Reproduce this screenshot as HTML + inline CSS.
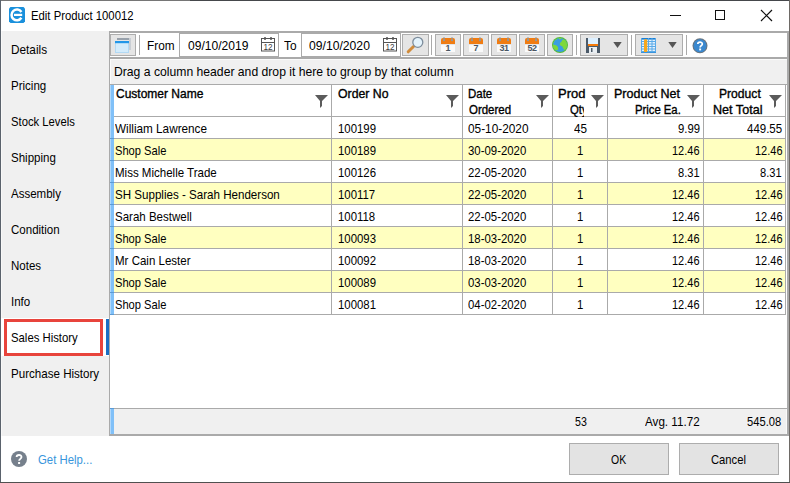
<!DOCTYPE html>
<html><head><meta charset="utf-8"><style>
html,body{margin:0;padding:0;width:790px;height:483px;overflow:hidden;background:#fff}
body{position:relative;font-family:"Liberation Sans",sans-serif}
.r{position:absolute;display:block}
.t{position:absolute;white-space:pre;line-height:16px;font-family:"Liberation Sans",sans-serif;transform-origin:0 0}
</style></head><body>
<div class="r" style="left:0px;top:0px;width:790px;height:483px;background:#fff;"></div>
<div class="r" style="left:0px;top:0px;width:790px;height:1px;background:#45474b;"></div>
<div class="r" style="left:0px;top:0px;width:190px;height:1px;background:#767676;"></div>
<div class="r" style="left:0px;top:0px;width:1px;height:483px;background:#5a626c;"></div>
<div class="r" style="left:789px;top:0px;width:1px;height:483px;background:#6e6a66;"></div>
<div class="r" style="left:0px;top:482px;width:790px;height:1px;background:#505050;"></div>
<svg class="r" style="left:9px;top:7px" width="16" height="16" viewBox="0 0 16 16">
<path d="M1.5,0 H14.5 L16,1.5 V14.5 L14.5,16 H1.5 L0,14.5 V1.5 Z" fill="#1a90dc"/>
<path d="M12.4,5 A5.35,5.35 0 1 0 12.4,10.8" fill="none" stroke="#fff" stroke-width="2.5"/>
<rect x="5" y="6.8" width="8.2" height="2.2" fill="#fff"/>
</svg>
<div class="t" style="left:30.80px;top:7.81px;font-size:12.1px;line-height:16px;color:#000;font-weight:normal;transform:scaleX(0.9357)">Edit Product 100012</div>
<div class="r" style="left:670px;top:15px;width:11px;height:1px;background:#111;"></div>
<div class="r" style="left:715px;top:10px;width:10px;height:10px;background:transparent;border:1px solid #111;box-sizing:border-box"></div>
<svg class="r" style="left:760px;top:9px" width="13" height="13" viewBox="0 0 13 13"><path d="M1,1 L12,12 M12,1 L1,12" stroke="#111" stroke-width="1.2"/></svg>
<div class="r" style="left:1px;top:31px;width:108px;height:405px;background:#f0f0f0;"></div>
<div class="r" style="left:1px;top:31px;width:1px;height:405px;background:#f8f8f8;"></div>
<div class="t" style="left:10.80px;top:41.56px;font-size:12.8px;line-height:16px;color:#000;font-weight:normal;transform:scaleX(0.9227)">Details</div>
<div class="t" style="left:10.80px;top:77.56px;font-size:12.8px;line-height:16px;color:#000;font-weight:normal;transform:scaleX(0.9000)">Pricing</div>
<div class="t" style="left:10.80px;top:113.56px;font-size:12.8px;line-height:16px;color:#000;font-weight:normal;transform:scaleX(0.8801)">Stock Levels</div>
<div class="t" style="left:10.80px;top:149.56px;font-size:12.8px;line-height:16px;color:#000;font-weight:normal;transform:scaleX(0.9000)">Shipping</div>
<div class="t" style="left:10.80px;top:185.56px;font-size:12.8px;line-height:16px;color:#000;font-weight:normal;transform:scaleX(0.9000)">Assembly</div>
<div class="t" style="left:10.80px;top:221.56px;font-size:12.8px;line-height:16px;color:#000;font-weight:normal;transform:scaleX(0.9000)">Condition</div>
<div class="t" style="left:10.80px;top:257.56px;font-size:12.8px;line-height:16px;color:#000;font-weight:normal;transform:scaleX(0.9000)">Notes</div>
<div class="t" style="left:10.80px;top:293.56px;font-size:12.8px;line-height:16px;color:#000;font-weight:normal;transform:scaleX(0.9000)">Info</div>
<div class="r" style="left:1px;top:318px;width:108px;height:38px;background:#fff;"></div>
<div class="r" style="left:4px;top:319px;width:99px;height:37px;background:transparent;border:3px solid #e8443c;box-sizing:border-box"></div>
<div class="r" style="left:106px;top:319px;width:3px;height:36px;background:#1a6fc4;"></div>
<div class="t" style="left:10.80px;top:329.56px;font-size:12.8px;line-height:16px;color:#000;font-weight:normal;transform:scaleX(0.8857)">Sales History</div>
<div class="t" style="left:10.80px;top:365.56px;font-size:12.8px;line-height:16px;color:#000;font-weight:normal;transform:scaleX(0.9048)">Purchase History</div>
<svg class="r" style="left:11px;top:451px" width="16" height="16" viewBox="0 0 16 16"><circle cx="8" cy="8" r="8" fill="#76808c"/>
<path d="M5.6,6.1 C5.6,3.3 10.5,3.3 10.5,6 C10.5,7.8 8.1,8 8.1,9.8" fill="none" stroke="#fff" stroke-width="1.8"/><rect x="7.1" y="11" width="2" height="2" fill="#fff"/></svg>
<div class="t" style="left:37.50px;top:451.56px;font-size:12.8px;line-height:16px;color:#3896dc;font-weight:normal;transform:scaleX(0.8876)">Get Help...</div>
<div class="r" style="left:569px;top:443px;width:100px;height:32px;background:#e3e3e3;border:1px solid #adadad;box-sizing:border-box"></div>
<div class="t" style="left:610.75px;top:451.56px;font-size:12.8px;line-height:16px;color:#000;font-weight:normal;transform:scaleX(0.8178)">OK</div>
<div class="r" style="left:679px;top:443px;width:100px;height:32px;background:#e3e3e3;border:1px solid #adadad;box-sizing:border-box"></div>
<div class="t" style="left:711.40px;top:451.56px;font-size:12.8px;line-height:16px;color:#000;font-weight:normal;transform:scaleX(0.8771)">Cancel</div>
<div class="r" style="left:109px;top:31px;width:680px;height:405px;background:#fff;"></div>
<div class="r" style="left:109px;top:31px;width:680px;height:2px;background:#aaaaaa;"></div>
<div class="r" style="left:109px;top:31px;width:1px;height:405px;background:#aaaaaa;"></div>
<div class="r" style="left:787px;top:31px;width:2px;height:405px;background:#aaaaaa;"></div>
<div class="r" style="left:109px;top:434px;width:680px;height:2px;background:#aaaaaa;"></div>
<div class="r" style="left:109px;top:57px;width:680px;height:2px;background:#aaaaaa;"></div>
<div class="r" style="left:110px;top:59px;width:677px;height:25px;background:#f0f0f0;"></div>
<div class="r" style="left:110px;top:59px;width:677px;height:1px;background:#fbfbfb;"></div>
<div class="r" style="left:110px;top:59px;width:1px;height:25px;background:#fbfbfb;"></div>
<div class="t" style="left:114.15px;top:63.56px;font-size:12.8px;line-height:16px;color:#000;font-weight:normal;transform:scaleX(0.9514)">Drag a column header and drop it here to group by that column</div>
<div class="r" style="left:110px;top:84px;width:677px;height:1px;background:#aaaaaa;"></div>
<div class="r" style="left:110px;top:34px;width:26px;height:22px;background:#e5e5e5;border:1px solid #adadad;box-sizing:border-box"></div>
<svg class="r" style="left:115px;top:38px" width="16" height="16" viewBox="0 0 16 16">
<rect x="2" y="0" width="14" height="2" fill="#98a1ab"/>
<rect x="14" y="0" width="2" height="12" fill="#c9ced4"/>
<rect x="0.5" y="3.5" width="13" height="11" fill="#d3ebfb" stroke="#b2d9f4"/>
<rect x="0" y="3" width="14" height="2.2" fill="#2196e8"/>
</svg>
<div class="r" style="left:139px;top:35px;width:1px;height:20px;background:#aaaaaa;"></div>
<div class="t" style="left:147.08px;top:37.56px;font-size:12.8px;line-height:16px;color:#000;font-weight:normal;transform:scaleX(0.9221)">From</div>
<div class="r" style="left:179px;top:33px;width:100px;height:24px;background:#fff;border:1px solid #aaaaaa;box-sizing:border-box"></div>
<div class="t" style="left:187.60px;top:37.56px;font-size:12.8px;line-height:16px;color:#000;font-weight:normal;transform:scaleX(0.9448)">09/10/2019</div>
<svg class="r" style="left:261px;top:36px" width="15" height="16" viewBox="0 0 15 16">
<rect x="0.5" y="2.5" width="13" height="12.5" fill="none" stroke="#555"/>
<line x1="0.5" y1="6.5" x2="13.5" y2="6.5" stroke="#555"/>
<rect x="3" y="1" width="2" height="3" rx="1" fill="#555"/><rect x="9" y="1" width="2" height="3" rx="1" fill="#555"/>
<text x="7.3" y="14" font-family="Liberation Sans" font-size="8.6" fill="#3a3a3a" text-anchor="middle" transform="scale(0.95,1)">12</text>
</svg>
<div class="t" style="left:284.10px;top:37.56px;font-size:12.8px;line-height:16px;color:#000;font-weight:normal;transform:scaleX(0.9255)">To</div>
<div class="r" style="left:301px;top:33px;width:100px;height:24px;background:#fff;border:1px solid #aaaaaa;box-sizing:border-box"></div>
<div class="t" style="left:309.10px;top:37.56px;font-size:12.8px;line-height:16px;color:#000;font-weight:normal;transform:scaleX(0.9510)">09/10/2020</div>
<svg class="r" style="left:383px;top:36px" width="15" height="16" viewBox="0 0 15 16">
<rect x="0.5" y="2.5" width="13" height="12.5" fill="none" stroke="#555"/>
<line x1="0.5" y1="6.5" x2="13.5" y2="6.5" stroke="#555"/>
<rect x="3" y="1" width="2" height="3" rx="1" fill="#555"/><rect x="9" y="1" width="2" height="3" rx="1" fill="#555"/>
<text x="7.3" y="14" font-family="Liberation Sans" font-size="8.6" fill="#3a3a3a" text-anchor="middle" transform="scale(0.95,1)">12</text>
</svg>
<div class="r" style="left:402px;top:34px;width:27px;height:22px;background:#e5e5e5;border:1px solid #adadad;box-sizing:border-box"></div>
<svg class="r" style="left:405px;top:36px" width="20" height="18" viewBox="0 0 20 18">
<line x1="3.2" y1="15.8" x2="8.5" y2="10.5" stroke="#d18c3c" stroke-width="3" stroke-linecap="round"/>
<circle cx="12.8" cy="6.3" r="5" fill="#e4f3fc" stroke="#7d8d9c" stroke-width="1.3"/>
</svg>
<div class="r" style="left:431px;top:35px;width:1px;height:20px;background:#aaaaaa;"></div>
<div class="r" style="left:435px;top:34px;width:26px;height:22px;background:#e5e5e5;border:1px solid #adadad;box-sizing:border-box"></div><svg class="r" style="left:441px;top:37px" width="15" height="16" viewBox="0 0 15 16">
<rect x="0" y="8" width="14" height="7" fill="#fafafa"/>
<path d="M0,3 Q0,1 2,1 H12 Q14,1 14,3 V7 H0 Z" fill="#f07c12"/>
<rect x="2.5" y="0" width="1" height="3" fill="#8a9aa8"/><rect x="10.5" y="0" width="1" height="3" fill="#8a9aa8"/>
<circle cx="3" cy="3.3" r="1" fill="#8a9aa8"/><circle cx="11" cy="3.3" r="1" fill="#8a9aa8"/>
<text x="7" y="14" font-family="Liberation Sans" font-weight="bold" font-size="9" letter-spacing="0" fill="#4a5663" text-anchor="middle">1</text>
</svg>
<div class="r" style="left:463px;top:34px;width:26px;height:22px;background:#e5e5e5;border:1px solid #adadad;box-sizing:border-box"></div><svg class="r" style="left:469px;top:37px" width="15" height="16" viewBox="0 0 15 16">
<rect x="0" y="8" width="14" height="7" fill="#fafafa"/>
<path d="M0,3 Q0,1 2,1 H12 Q14,1 14,3 V7 H0 Z" fill="#f07c12"/>
<rect x="2.5" y="0" width="1" height="3" fill="#8a9aa8"/><rect x="10.5" y="0" width="1" height="3" fill="#8a9aa8"/>
<circle cx="3" cy="3.3" r="1" fill="#8a9aa8"/><circle cx="11" cy="3.3" r="1" fill="#8a9aa8"/>
<text x="7" y="14" font-family="Liberation Sans" font-weight="bold" font-size="9" letter-spacing="0" fill="#4a5663" text-anchor="middle">7</text>
</svg>
<div class="r" style="left:491px;top:34px;width:26px;height:22px;background:#e5e5e5;border:1px solid #adadad;box-sizing:border-box"></div><svg class="r" style="left:497px;top:37px" width="15" height="16" viewBox="0 0 15 16">
<rect x="0" y="8" width="14" height="7" fill="#fafafa"/>
<path d="M0,3 Q0,1 2,1 H12 Q14,1 14,3 V7 H0 Z" fill="#f07c12"/>
<rect x="2.5" y="0" width="1" height="3" fill="#8a9aa8"/><rect x="10.5" y="0" width="1" height="3" fill="#8a9aa8"/>
<circle cx="3" cy="3.3" r="1" fill="#8a9aa8"/><circle cx="11" cy="3.3" r="1" fill="#8a9aa8"/>
<text x="7" y="14" font-family="Liberation Sans" font-weight="bold" font-size="9" letter-spacing="-0.4" fill="#4a5663" text-anchor="middle">31</text>
</svg>
<div class="r" style="left:519px;top:34px;width:26px;height:22px;background:#e5e5e5;border:1px solid #adadad;box-sizing:border-box"></div><svg class="r" style="left:525px;top:37px" width="15" height="16" viewBox="0 0 15 16">
<rect x="0" y="8" width="14" height="7" fill="#fafafa"/>
<path d="M0,3 Q0,1 2,1 H12 Q14,1 14,3 V7 H0 Z" fill="#f07c12"/>
<rect x="2.5" y="0" width="1" height="3" fill="#8a9aa8"/><rect x="10.5" y="0" width="1" height="3" fill="#8a9aa8"/>
<circle cx="3" cy="3.3" r="1" fill="#8a9aa8"/><circle cx="11" cy="3.3" r="1" fill="#8a9aa8"/>
<text x="7" y="14" font-family="Liberation Sans" font-weight="bold" font-size="9" letter-spacing="-0.4" fill="#4a5663" text-anchor="middle">52</text>
</svg>
<div class="r" style="left:547px;top:34px;width:26px;height:22px;background:#e5e5e5;border:1px solid #adadad;box-sizing:border-box"></div>
<svg class="r" style="left:552px;top:37px" width="16" height="16" viewBox="0 0 16 16">
<defs><clipPath id="gc"><circle cx="8" cy="8" r="7.1"/></clipPath></defs>
<circle cx="8" cy="8" r="8" fill="#58bd30"/>
<circle cx="8" cy="8" r="7.1" fill="#3a9de2"/>
<g clip-path="url(#gc)" fill="#7ed83a">
<path d="M0,0 H6 C6,1.5 5,2.5 3.5,3 C2.5,3.5 2,4.5 1.8,6 L0,6 Z"/>
<path d="M6.5,0 H10 C10,1.5 9,2.2 7.5,2.2 C6.8,2.2 6.5,1 6.5,0 Z"/>
<path d="M10.5,2.5 C12,2.5 14,3 16,4 V16 H13 C13,14 12.5,13 12,12.5 C11,11.5 10.5,10.5 10.5,9.5 C10,9 8.5,9 8,8 C7.5,7 8,6 8.5,5.5 C9.5,5 10,3.5 10.5,2.5 Z"/>
<path d="M0,7.5 C2,7.5 4,8 5,9 C6,10 6.5,11 6,12.5 C5.5,13.5 4.5,13 3.5,13 C2,13 1,12 0,11 Z"/>
</g>
</svg>
<div class="r" style="left:576px;top:35px;width:1px;height:20px;background:#aaaaaa;"></div>
<div class="r" style="left:580px;top:34px;width:48px;height:22px;background:#e5e5e5;border:1px solid #adadad;box-sizing:border-box"></div>
<svg class="r" style="left:586px;top:38px" width="15" height="16" viewBox="0 0 15 16">
<rect x="0" y="0" width="14" height="15" fill="#4b5a69"/>
<rect x="2" y="0" width="10" height="6" fill="#dcefff"/>
<rect x="2" y="6" width="10" height="2" fill="#f47a0a"/>
<rect x="3" y="9" width="8" height="6" fill="#e9eef2"/>
<rect x="5" y="10" width="1.5" height="4" fill="#4b5a69"/>
</svg>
<svg class="r" style="left:613px;top:42px" width="9" height="6" viewBox="0 0 9 6"><path d="M0.3,0 H8.7 L4.5,6 Z" fill="#555"/></svg>
<div class="r" style="left:631px;top:35px;width:1px;height:20px;background:#aaaaaa;"></div>
<div class="r" style="left:635px;top:34px;width:48px;height:22px;background:#e5e5e5;border:1px solid #adadad;box-sizing:border-box"></div>
<svg class="r" style="left:641px;top:38px" width="15" height="16" viewBox="0 0 15 16">
<rect x="0" y="0" width="15" height="15" fill="#e6f2fc"/>
<rect x="0" y="0" width="15" height="1.6" fill="#1a7fd4"/>
<g fill="#5aaae8"><rect x="0" y="3" width="15" height="1"/><rect x="0" y="5.5" width="15" height="1"/><rect x="0" y="8" width="15" height="1"/><rect x="0" y="10.5" width="15" height="1"/><rect x="0" y="13" width="15" height="1"/>
<rect x="0" y="0" width="1" height="15"/><rect x="7" y="0" width="1" height="15"/><rect x="10.5" y="0" width="1" height="15"/><rect x="14" y="0" width="1" height="15"/></g>
<rect x="3" y="1" width="3.2" height="14" rx="1.5" fill="#f7a81c"/>
<rect x="0" y="14" width="15" height="1" fill="#3a94dc"/>
</svg>
<svg class="r" style="left:668px;top:42px" width="9" height="6" viewBox="0 0 9 6"><path d="M0.3,0 H8.7 L4.5,6 Z" fill="#555"/></svg>
<div class="r" style="left:686px;top:35px;width:1px;height:20px;background:#aaaaaa;"></div>
<svg class="r" style="left:692px;top:38px" width="16" height="16" viewBox="0 0 16 16">
<circle cx="8" cy="7.8" r="7.5" fill="#6a737c"/>
<circle cx="8" cy="7.8" r="6.5" fill="#3a88cf"/>
<path d="M5.8,6 C5.8,3.6 10.3,3.6 10.3,5.9 C10.3,7.5 8.1,7.7 8.1,9.4" fill="none" stroke="#fff" stroke-width="1.7"/><rect x="7.2" y="10.5" width="1.9" height="1.9" fill="#fff"/>
</svg>
<div class="r" style="left:110px;top:85px;width:676px;height:31px;background:#fff;"></div>
<div class="r" style="left:110px;top:116px;width:676px;height:1px;background:#aaaaaa;"></div>
<div class="r" style="left:331px;top:85px;width:1px;height:230px;background:#aaaaaa;"></div>
<div class="r" style="left:462px;top:85px;width:1px;height:230px;background:#aaaaaa;"></div>
<div class="r" style="left:552px;top:85px;width:1px;height:230px;background:#aaaaaa;"></div>
<div class="r" style="left:607px;top:85px;width:1px;height:230px;background:#aaaaaa;"></div>
<div class="r" style="left:703px;top:85px;width:1px;height:230px;background:#aaaaaa;"></div>
<div class="r" style="left:785px;top:85px;width:1px;height:230px;background:#aaaaaa;"></div>
<div class="r" style="left:110px;top:85px;width:4px;height:230px;background:#80c0f8;"></div>
<div class="r" style="left:110px;top:85px;width:1px;height:230px;background:#b0d8fc;"></div>
<svg class="r" style="left:315px;top:95px" width="13" height="13" viewBox="0 0 13 13"><path d="M0,0 H13 L7,6 V11 L5,13 V6 Z" fill="#5b5b5b"/></svg>
<svg class="r" style="left:446px;top:95px" width="13" height="13" viewBox="0 0 13 13"><path d="M0,0 H13 L7,6 V11 L5,13 V6 Z" fill="#5b5b5b"/></svg>
<svg class="r" style="left:536px;top:95px" width="13" height="13" viewBox="0 0 13 13"><path d="M0,0 H13 L7,6 V11 L5,13 V6 Z" fill="#5b5b5b"/></svg>
<svg class="r" style="left:591px;top:95px" width="13" height="13" viewBox="0 0 13 13"><path d="M0,0 H13 L7,6 V11 L5,13 V6 Z" fill="#5b5b5b"/></svg>
<svg class="r" style="left:687px;top:95px" width="13" height="13" viewBox="0 0 13 13"><path d="M0,0 H13 L7,6 V11 L5,13 V6 Z" fill="#5b5b5b"/></svg>
<svg class="r" style="left:769px;top:95px" width="13" height="13" viewBox="0 0 13 13"><path d="M0,0 H13 L7,6 V11 L5,13 V6 Z" fill="#5b5b5b"/></svg>
<div class="t" style="left:115.50px;top:85.77px;font-size:12.2px;line-height:16px;color:#000;font-weight:normal;-webkit-text-stroke:0.35px currentColor;transform:scaleX(0.9849)">Customer Name</div>
<div class="t" style="left:337.60px;top:85.77px;font-size:12.2px;line-height:16px;color:#000;font-weight:normal;-webkit-text-stroke:0.35px currentColor;transform:scaleX(1.0071)">Order No</div>
<div class="t" style="left:467.76px;top:85.77px;font-size:12.2px;line-height:16px;color:#000;font-weight:normal;-webkit-text-stroke:0.35px currentColor;transform:scaleX(0.9400)">Date</div>
<div class="t" style="left:468.70px;top:101.77px;font-size:12.2px;line-height:16px;color:#000;font-weight:normal;-webkit-text-stroke:0.35px currentColor;transform:scaleX(0.9400)">Ordered</div>
<div class="t" style="left:557.74px;top:85.77px;font-size:12.2px;line-height:16px;color:#000;font-weight:normal;-webkit-text-stroke:0.35px currentColor;transform:scaleX(1.0640)">Prod</div>
<div class="r" style="left:569.5px;top:101.77px;width:14.8px;height:16px;overflow:hidden"><div class="t" style="left:0.3px;top:0;font-size:12.2px;font-weight:normal;-webkit-text-stroke:0.35px #000;transform:scaleX(0.93)">Qty</div></div>
<div class="t" style="left:613.57px;top:85.77px;font-size:12.2px;line-height:16px;color:#000;font-weight:normal;-webkit-text-stroke:0.35px currentColor;transform:scaleX(1.0255)">Product Net</div>
<div class="t" style="left:634.77px;top:101.77px;font-size:12.2px;line-height:16px;color:#000;font-weight:normal;-webkit-text-stroke:0.35px currentColor;transform:scaleX(0.9259)">Price Ea.</div>
<div class="t" style="left:719.31px;top:85.77px;font-size:12.2px;line-height:16px;color:#000;font-weight:normal;-webkit-text-stroke:0.35px currentColor;transform:scaleX(0.9948)">Product</div>
<div class="t" style="left:712.77px;top:101.77px;font-size:12.2px;line-height:16px;color:#000;font-weight:normal;-webkit-text-stroke:0.35px currentColor;transform:scaleX(1.0326)">Net Total</div>
<div class="r" style="left:114px;top:117px;width:671px;height:21px;background:#fff;"></div>
<div class="r" style="left:110px;top:138px;width:675px;height:1px;background:#aaaaaa;"></div>
<div class="r" style="left:110px;top:138px;width:4px;height:1px;background:#5b9bd5;"></div>
<div class="t" style="left:115.20px;top:120.56px;font-size:12.8px;line-height:16px;color:#000;font-weight:normal;transform:scaleX(0.9176)">William Lawrence</div>
<div class="t" style="left:338.20px;top:120.56px;font-size:12.8px;line-height:16px;color:#000;font-weight:normal;transform:scaleX(0.8900)">100199</div>
<div class="t" style="left:468.00px;top:120.56px;font-size:12.8px;line-height:16px;color:#000;font-weight:normal;transform:scaleX(0.9244)">05-10-2020</div>
<div class="t" style="left:574.05px;top:120.56px;font-size:12.8px;line-height:16px;color:#000;font-weight:normal;transform:scaleX(0.9138)">45</div>
<div class="t" style="left:677.80px;top:120.56px;font-size:12.8px;line-height:16px;color:#000;font-weight:normal;transform:scaleX(0.8834)">9.99</div>
<div class="t" style="left:746.90px;top:120.56px;font-size:12.8px;line-height:16px;color:#000;font-weight:normal;transform:scaleX(0.8969)">449.55</div>
<div class="r" style="left:114px;top:139px;width:671px;height:21px;background:#ffffc0;"></div>
<div class="r" style="left:110px;top:160px;width:675px;height:1px;background:#aaaaaa;"></div>
<div class="r" style="left:110px;top:160px;width:4px;height:1px;background:#5b9bd5;"></div>
<div class="t" style="left:115.20px;top:142.56px;font-size:12.8px;line-height:16px;color:#000;font-weight:normal;transform:scaleX(0.8704)">Shop Sale</div>
<div class="t" style="left:338.20px;top:142.56px;font-size:12.8px;line-height:16px;color:#000;font-weight:normal;transform:scaleX(0.8900)">100189</div>
<div class="t" style="left:468.00px;top:142.56px;font-size:12.8px;line-height:16px;color:#000;font-weight:normal;transform:scaleX(0.8900)">30-09-2020</div>
<div class="t" style="left:577.38px;top:142.56px;font-size:12.8px;line-height:16px;color:#000;font-weight:normal;transform:scaleX(0.8900)">1</div>
<div class="t" style="left:672.30px;top:142.56px;font-size:12.8px;line-height:16px;color:#000;font-weight:normal;transform:scaleX(0.8588)">12.46</div>
<div class="t" style="left:754.50px;top:142.56px;font-size:12.8px;line-height:16px;color:#000;font-weight:normal;transform:scaleX(0.8588)">12.46</div>
<div class="r" style="left:114px;top:161px;width:671px;height:21px;background:#fff;"></div>
<div class="r" style="left:110px;top:182px;width:675px;height:1px;background:#aaaaaa;"></div>
<div class="r" style="left:110px;top:182px;width:4px;height:1px;background:#5b9bd5;"></div>
<div class="t" style="left:115.20px;top:164.56px;font-size:12.8px;line-height:16px;color:#000;font-weight:normal;transform:scaleX(0.9000)">Miss Michelle Trade</div>
<div class="t" style="left:338.20px;top:164.56px;font-size:12.8px;line-height:16px;color:#000;font-weight:normal;transform:scaleX(0.8900)">100126</div>
<div class="t" style="left:468.00px;top:164.56px;font-size:12.8px;line-height:16px;color:#000;font-weight:normal;transform:scaleX(0.8900)">22-05-2020</div>
<div class="t" style="left:577.38px;top:164.56px;font-size:12.8px;line-height:16px;color:#000;font-weight:normal;transform:scaleX(0.8900)">1</div>
<div class="t" style="left:678.20px;top:164.56px;font-size:12.8px;line-height:16px;color:#000;font-weight:normal;transform:scaleX(0.8673)">8.31</div>
<div class="t" style="left:760.40px;top:164.56px;font-size:12.8px;line-height:16px;color:#000;font-weight:normal;transform:scaleX(0.8673)">8.31</div>
<div class="r" style="left:114px;top:183px;width:671px;height:21px;background:#ffffc0;"></div>
<div class="r" style="left:110px;top:204px;width:675px;height:1px;background:#aaaaaa;"></div>
<div class="r" style="left:110px;top:204px;width:4px;height:1px;background:#5b9bd5;"></div>
<div class="t" style="left:115.20px;top:186.56px;font-size:12.8px;line-height:16px;color:#000;font-weight:normal;transform:scaleX(0.9050)">SH Supplies - Sarah Henderson</div>
<div class="t" style="left:338.20px;top:186.56px;font-size:12.8px;line-height:16px;color:#000;font-weight:normal;transform:scaleX(0.8900)">100117</div>
<div class="t" style="left:468.00px;top:186.56px;font-size:12.8px;line-height:16px;color:#000;font-weight:normal;transform:scaleX(0.8900)">22-05-2020</div>
<div class="t" style="left:577.38px;top:186.56px;font-size:12.8px;line-height:16px;color:#000;font-weight:normal;transform:scaleX(0.8900)">1</div>
<div class="t" style="left:672.30px;top:186.56px;font-size:12.8px;line-height:16px;color:#000;font-weight:normal;transform:scaleX(0.8588)">12.46</div>
<div class="t" style="left:754.50px;top:186.56px;font-size:12.8px;line-height:16px;color:#000;font-weight:normal;transform:scaleX(0.8588)">12.46</div>
<div class="r" style="left:114px;top:205px;width:671px;height:21px;background:#fff;"></div>
<div class="r" style="left:110px;top:226px;width:675px;height:1px;background:#aaaaaa;"></div>
<div class="r" style="left:110px;top:226px;width:4px;height:1px;background:#5b9bd5;"></div>
<div class="t" style="left:115.20px;top:208.56px;font-size:12.8px;line-height:16px;color:#000;font-weight:normal;transform:scaleX(0.9000)">Sarah Bestwell</div>
<div class="t" style="left:338.20px;top:208.56px;font-size:12.8px;line-height:16px;color:#000;font-weight:normal;transform:scaleX(0.8900)">100118</div>
<div class="t" style="left:468.00px;top:208.56px;font-size:12.8px;line-height:16px;color:#000;font-weight:normal;transform:scaleX(0.8900)">22-05-2020</div>
<div class="t" style="left:577.38px;top:208.56px;font-size:12.8px;line-height:16px;color:#000;font-weight:normal;transform:scaleX(0.8900)">1</div>
<div class="t" style="left:672.30px;top:208.56px;font-size:12.8px;line-height:16px;color:#000;font-weight:normal;transform:scaleX(0.8588)">12.46</div>
<div class="t" style="left:754.50px;top:208.56px;font-size:12.8px;line-height:16px;color:#000;font-weight:normal;transform:scaleX(0.8588)">12.46</div>
<div class="r" style="left:114px;top:227px;width:671px;height:21px;background:#ffffc0;"></div>
<div class="r" style="left:110px;top:248px;width:675px;height:1px;background:#aaaaaa;"></div>
<div class="r" style="left:110px;top:248px;width:4px;height:1px;background:#5b9bd5;"></div>
<div class="t" style="left:115.20px;top:230.56px;font-size:12.8px;line-height:16px;color:#000;font-weight:normal;transform:scaleX(0.8704)">Shop Sale</div>
<div class="t" style="left:338.20px;top:230.56px;font-size:12.8px;line-height:16px;color:#000;font-weight:normal;transform:scaleX(0.8900)">100093</div>
<div class="t" style="left:468.00px;top:230.56px;font-size:12.8px;line-height:16px;color:#000;font-weight:normal;transform:scaleX(0.8900)">18-03-2020</div>
<div class="t" style="left:577.38px;top:230.56px;font-size:12.8px;line-height:16px;color:#000;font-weight:normal;transform:scaleX(0.8900)">1</div>
<div class="t" style="left:672.30px;top:230.56px;font-size:12.8px;line-height:16px;color:#000;font-weight:normal;transform:scaleX(0.8588)">12.46</div>
<div class="t" style="left:754.50px;top:230.56px;font-size:12.8px;line-height:16px;color:#000;font-weight:normal;transform:scaleX(0.8588)">12.46</div>
<div class="r" style="left:114px;top:249px;width:671px;height:21px;background:#fff;"></div>
<div class="r" style="left:110px;top:270px;width:675px;height:1px;background:#aaaaaa;"></div>
<div class="r" style="left:110px;top:270px;width:4px;height:1px;background:#5b9bd5;"></div>
<div class="t" style="left:115.20px;top:252.56px;font-size:12.8px;line-height:16px;color:#000;font-weight:normal;transform:scaleX(0.9000)">Mr Cain Lester</div>
<div class="t" style="left:338.20px;top:252.56px;font-size:12.8px;line-height:16px;color:#000;font-weight:normal;transform:scaleX(0.8900)">100092</div>
<div class="t" style="left:468.00px;top:252.56px;font-size:12.8px;line-height:16px;color:#000;font-weight:normal;transform:scaleX(0.8900)">18-03-2020</div>
<div class="t" style="left:577.38px;top:252.56px;font-size:12.8px;line-height:16px;color:#000;font-weight:normal;transform:scaleX(0.8900)">1</div>
<div class="t" style="left:672.30px;top:252.56px;font-size:12.8px;line-height:16px;color:#000;font-weight:normal;transform:scaleX(0.8588)">12.46</div>
<div class="t" style="left:754.50px;top:252.56px;font-size:12.8px;line-height:16px;color:#000;font-weight:normal;transform:scaleX(0.8588)">12.46</div>
<div class="r" style="left:114px;top:271px;width:671px;height:21px;background:#ffffc0;"></div>
<div class="r" style="left:110px;top:292px;width:675px;height:1px;background:#aaaaaa;"></div>
<div class="r" style="left:110px;top:292px;width:4px;height:1px;background:#5b9bd5;"></div>
<div class="t" style="left:115.20px;top:274.56px;font-size:12.8px;line-height:16px;color:#000;font-weight:normal;transform:scaleX(0.8704)">Shop Sale</div>
<div class="t" style="left:338.20px;top:274.56px;font-size:12.8px;line-height:16px;color:#000;font-weight:normal;transform:scaleX(0.8900)">100089</div>
<div class="t" style="left:468.00px;top:274.56px;font-size:12.8px;line-height:16px;color:#000;font-weight:normal;transform:scaleX(0.8900)">03-03-2020</div>
<div class="t" style="left:577.38px;top:274.56px;font-size:12.8px;line-height:16px;color:#000;font-weight:normal;transform:scaleX(0.8900)">1</div>
<div class="t" style="left:672.30px;top:274.56px;font-size:12.8px;line-height:16px;color:#000;font-weight:normal;transform:scaleX(0.8588)">12.46</div>
<div class="t" style="left:754.50px;top:274.56px;font-size:12.8px;line-height:16px;color:#000;font-weight:normal;transform:scaleX(0.8588)">12.46</div>
<div class="r" style="left:114px;top:293px;width:671px;height:21px;background:#fff;"></div>
<div class="r" style="left:110px;top:314px;width:675px;height:1px;background:#aaaaaa;"></div>
<div class="r" style="left:110px;top:314px;width:4px;height:1px;background:#5b9bd5;"></div>
<div class="t" style="left:115.20px;top:296.56px;font-size:12.8px;line-height:16px;color:#000;font-weight:normal;transform:scaleX(0.8704)">Shop Sale</div>
<div class="t" style="left:338.20px;top:296.56px;font-size:12.8px;line-height:16px;color:#000;font-weight:normal;transform:scaleX(0.8900)">100081</div>
<div class="t" style="left:468.00px;top:296.56px;font-size:12.8px;line-height:16px;color:#000;font-weight:normal;transform:scaleX(0.8900)">04-02-2020</div>
<div class="t" style="left:577.38px;top:296.56px;font-size:12.8px;line-height:16px;color:#000;font-weight:normal;transform:scaleX(0.8900)">1</div>
<div class="t" style="left:672.30px;top:296.56px;font-size:12.8px;line-height:16px;color:#000;font-weight:normal;transform:scaleX(0.8588)">12.46</div>
<div class="t" style="left:754.50px;top:296.56px;font-size:12.8px;line-height:16px;color:#000;font-weight:normal;transform:scaleX(0.8588)">12.46</div>
<div class="r" style="left:331px;top:85px;width:1px;height:230px;background:#aaaaaa;"></div>
<div class="r" style="left:462px;top:85px;width:1px;height:230px;background:#aaaaaa;"></div>
<div class="r" style="left:552px;top:85px;width:1px;height:230px;background:#aaaaaa;"></div>
<div class="r" style="left:607px;top:85px;width:1px;height:230px;background:#aaaaaa;"></div>
<div class="r" style="left:703px;top:85px;width:1px;height:230px;background:#aaaaaa;"></div>
<div class="r" style="left:785px;top:85px;width:1px;height:230px;background:#aaaaaa;"></div>
<div class="r" style="left:110px;top:408px;width:677px;height:1px;background:#aaaaaa;"></div>
<div class="r" style="left:110px;top:409px;width:677px;height:25px;background:#f0f0f0;"></div>
<div class="r" style="left:786px;top:409px;width:1px;height:25px;background:#fafafa;"></div>
<div class="r" style="left:110px;top:408px;width:4px;height:26px;background:#80c0f8;"></div>
<div class="r" style="left:110px;top:408px;width:1px;height:26px;background:#b0d8fc;"></div>
<div class="r" style="left:110px;top:408px;width:4px;height:1px;background:#5b9bd5;"></div>
<div class="t" style="left:575.30px;top:413.56px;font-size:12.8px;line-height:16px;color:#000;font-weight:normal;transform:scaleX(0.8288)">53</div>
<div class="t" style="left:644.70px;top:413.56px;font-size:12.8px;line-height:16px;color:#000;font-weight:normal;transform:scaleX(0.9100)">Avg. 11.72</div>
<div class="t" style="left:747.30px;top:413.56px;font-size:12.8px;line-height:16px;color:#000;font-weight:normal;transform:scaleX(0.8738)">545.08</div>
</body></html>
